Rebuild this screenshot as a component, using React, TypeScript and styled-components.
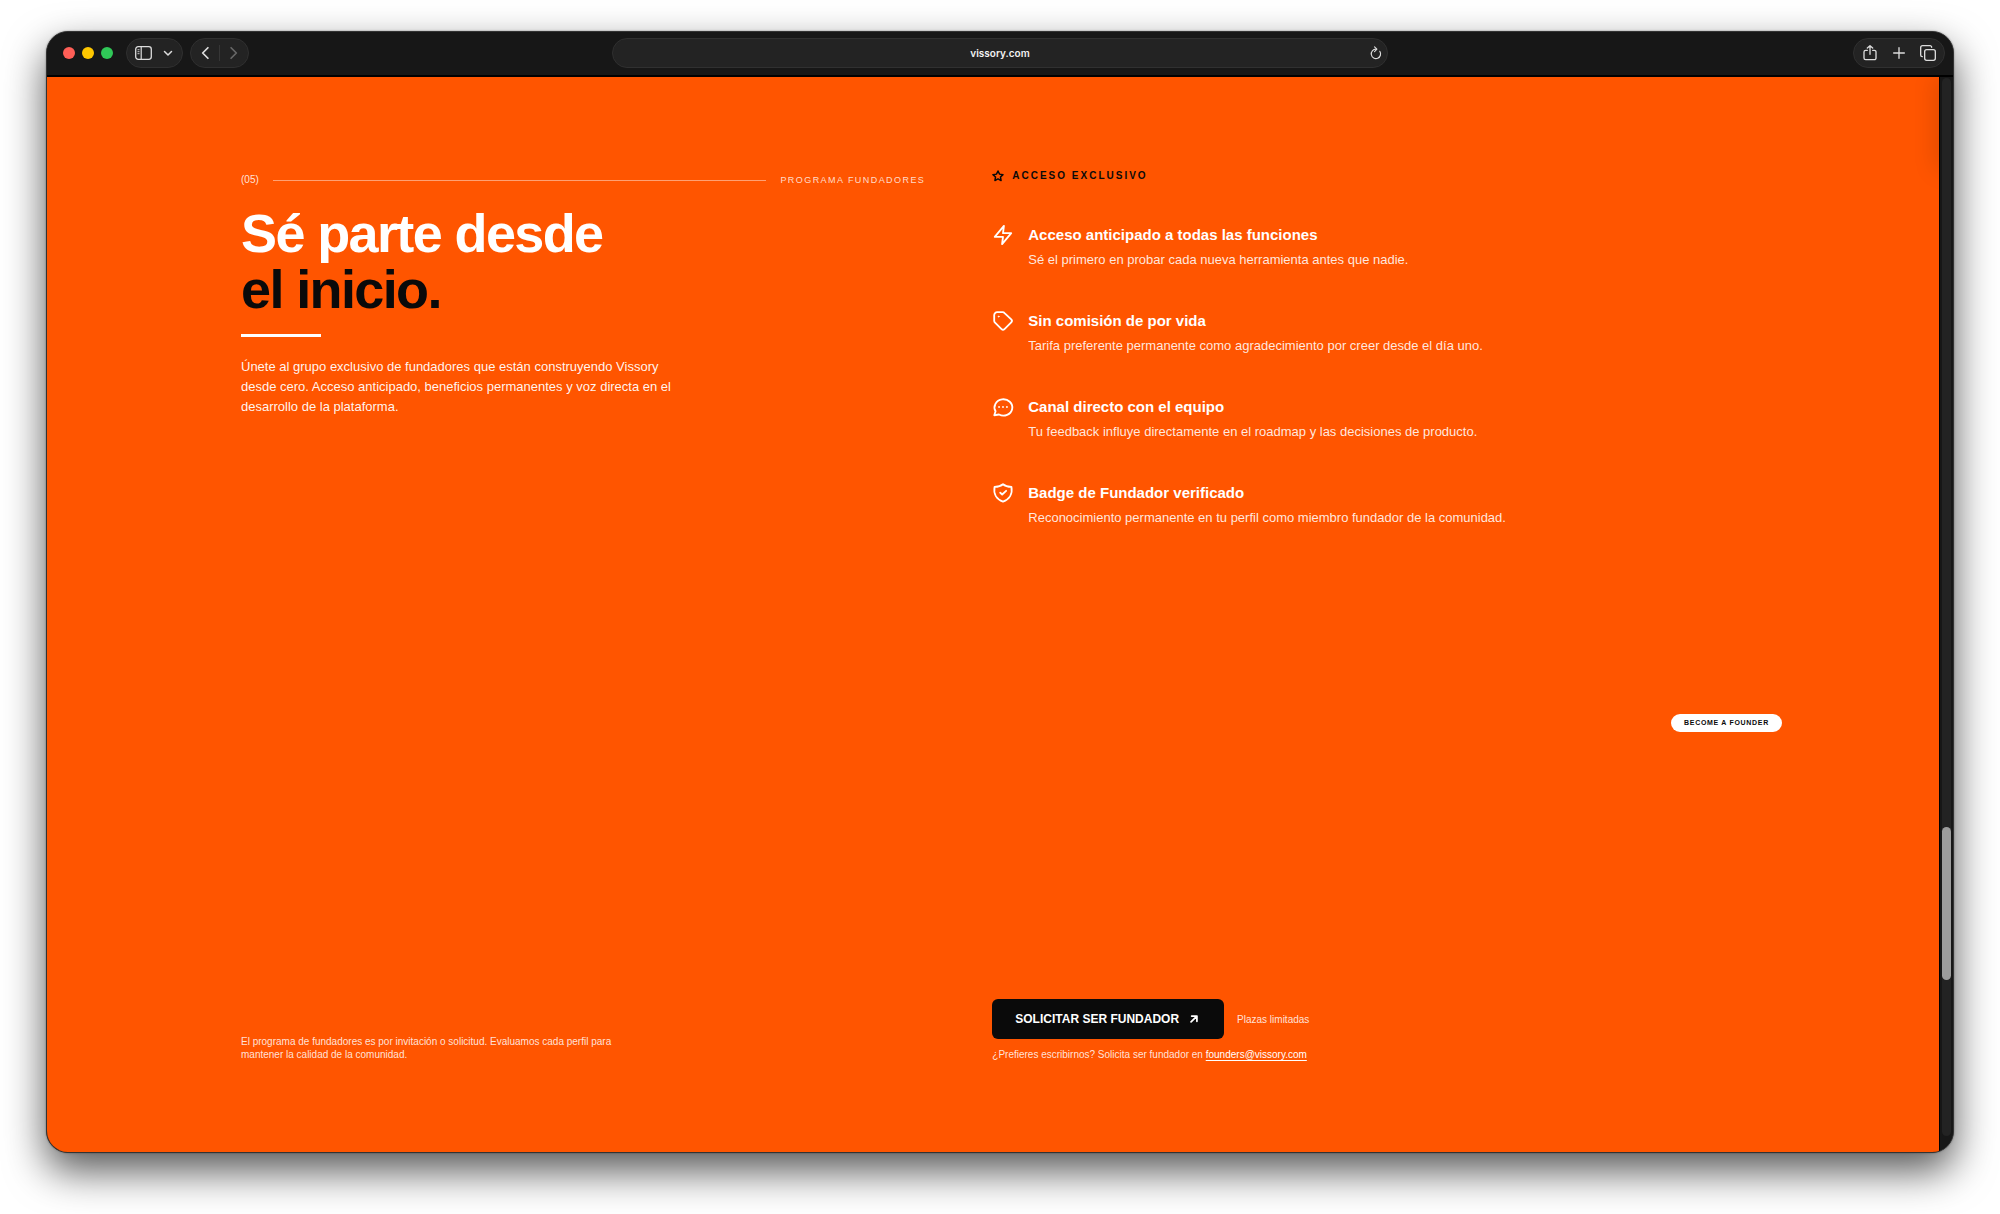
import React, { useState } from "react";
import styled, { createGlobalStyle } from "styled-components";

const orange = "#ff5500";
const ink = "#0a0a0a";

const GlobalStyle = createGlobalStyle`
  *, *::before, *::after { box-sizing: border-box; }
  body {
    margin: 0;
    background: #fff;
    font-family: "Liberation Sans", Arial, Helvetica, sans-serif;
    -webkit-font-smoothing: antialiased;
  }
  h2, h3, p, ul { margin: 0; padding: 0; }
  button, input { font: inherit; }
  svg { display: block; flex: none; }
`;

const Desktop = styled.div`
  display: flex;
  min-height: 100vh;
  padding: 31px 46px 61px;
`;

const Window = styled.div`
  flex: 1;
  min-width: 0;
  display: flex;
  flex-direction: column;
  overflow: hidden;
  border: 1px solid #333;
  border-radius: 22px;
  background: #171717;
  box-shadow: 0 18px 40px rgba(0, 0, 0, 0.66), 0 0 2px rgba(0, 0, 0, 0.4);
`;

const Toolbar = styled.header`
  display: grid;
  grid-template-columns: 1fr minmax(0, 776px) 1fr;
  align-items: center;
  height: 45px;
  padding: 0 8px 1px;
  border-bottom: 2px solid #000;
  background: #171717;
`;

const ToolbarSide = styled.div<{ $end?: boolean }>`
  display: flex;
  align-items: center;
  gap: 7px;
  justify-content: ${(p) => (p.$end ? "flex-end" : "flex-start")};
`;

const Lights = styled.div`
  display: flex;
  gap: 7px;
  margin: 0 6px 0 8px;
`;

const Light = styled.button<{ $color: string }>`
  width: 12px;
  height: 12px;
  padding: 0;
  border: 0;
  border-radius: 50%;
  background: ${(p) => p.$color};
`;

const Pill = styled.div<{ $gap: number; $pad: number }>`
  display: flex;
  align-items: center;
  gap: ${(p) => p.$gap}px;
  height: 30px;
  padding: 0 ${(p) => p.$pad}px;
  border: 1px solid #303030;
  border-radius: 15px;
  background: #232323;
`;

const IconButton = styled.button<{ $dim?: boolean }>`
  display: flex;
  padding: 0;
  border: 0;
  background: none;
  color: ${(p) => (p.$dim ? "#666" : "#dcdcdc")};
`;

const PillDivider = styled.span`
  width: 1px;
  height: 16px;
  background: #363636;
`;

const Address = styled.form`
  display: flex;
  align-items: center;
  height: 30px;
  padding: 0 4px 0 18px;
  border: 1px solid #303030;
  border-radius: 15px;
  background: #232323;
`;

const AddressInput = styled.input`
  flex: 1;
  min-width: 0;
  padding: 0;
  border: 0;
  outline: 0;
  background: none;
  color: #f2f2f2;
  font-family: Inter, "Liberation Sans", sans-serif;
  font-size: 10px;
  font-weight: 600;
  line-height: 14px;
  text-align: center;
`;

const Viewport = styled.div`
  flex: 1;
  display: flex;
`;

const Page = styled.main`
  position: relative;
  flex: 1;
  min-width: 0;
  display: flex;
  overflow: hidden;
  padding: 93px 32px 91px;
  background: ${orange};
  color: #fff;

  &::after {
    content: "";
    position: absolute;
    top: 0;
    right: -12px;
    width: 12px;
    height: 92px;
    box-shadow: 0 0 24px rgba(0, 0, 0, 0.22);
  }
`;

const Columns = styled.section`
  flex: 1;
  display: grid;
  grid-template-columns: minmax(0, 10fr) minmax(0, 11fr);
  column-gap: 67px;
  max-width: 1504px;
  margin: 0 auto;
`;

const Column = styled.div`
  display: flex;
  flex-direction: column;
  justify-content: space-between;
`;

const SectionHead = styled.div`
  display: flex;
  align-items: center;
  gap: 14px;
  height: 20px;
  margin-bottom: 15px;
`;

const SectionNumber = styled.span`
  color: rgba(255, 255, 255, 0.85);
  font-size: 10px;
  line-height: 14px;
`;

const SectionRule = styled.span`
  flex: 1;
  height: 1px;
  background: rgba(255, 255, 255, 0.45);
`;

const SectionLabel = styled.span`
  color: rgba(255, 255, 255, 0.8);
  font-size: 9px;
  line-height: 14px;
  letter-spacing: 0.16em;
  text-transform: uppercase;
`;

const Title = styled.h2`
  font-size: 54px;
  font-weight: 700;
  line-height: 56px;
  letter-spacing: -0.03em;
`;

const TitleAccent = styled.span`
  display: block;
  color: ${ink};
`;

const TitleBar = styled.div`
  width: 80px;
  height: 3px;
  margin: 17px 0 20px;
  background: #fff;
`;

const Lead = styled.p`
  max-width: 432px;
  color: rgba(255, 255, 255, 0.95);
  font-size: 13px;
  line-height: 20px;
`;

const Note = styled.p`
  max-width: 380px;
  color: rgba(255, 255, 255, 0.85);
  font-size: 10px;
  line-height: 13px;
`;

const Eyebrow = styled.p`
  display: flex;
  align-items: center;
  gap: 8px;
  margin-bottom: 42px;
  color: ${ink};
  font-size: 10px;
  font-weight: 700;
  line-height: 12px;
  letter-spacing: 0.2em;
  text-transform: uppercase;
`;

const Benefits = styled.ul`
  display: flex;
  flex-direction: column;
  gap: 40px;
  list-style: none;
`;

const Benefit = styled.li`
  display: flex;
  gap: 14px;
`;

const BenefitTitle = styled.h3`
  margin-bottom: 4px;
  font-size: 15px;
  font-weight: 700;
  line-height: 22px;
`;

const BenefitText = styled.p`
  color: rgba(255, 255, 255, 0.88);
  font-size: 13px;
  line-height: 20px;
`;

const Actions = styled.div`
  display: flex;
  align-items: center;
  gap: 13px;
  margin-bottom: 9px;
`;

const Apply = styled.button`
  display: flex;
  align-items: center;
  gap: 8px;
  height: 40px;
  padding: 0 23px;
  border: 0;
  border-radius: 6px;
  background: ${ink};
  color: #fff;
  font-size: 12px;
  font-weight: 700;
  text-transform: uppercase;
`;

const Small = styled.p`
  color: rgba(255, 255, 255, 0.85);
  font-size: 10px;
  line-height: 13px;
`;

const MailLink = styled.a`
  color: #fff;
  text-decoration: underline;
  text-underline-offset: 2px;
`;

const FounderBadge = styled.button`
  position: absolute;
  top: 637px;
  right: 157px;
  height: 18px;
  padding: 0 13px;
  border: 0;
  border-radius: 9px;
  background: #fff;
  color: ${ink};
  font-size: 7px;
  font-weight: 700;
  line-height: 18px;
  letter-spacing: 0.1em;
  text-transform: uppercase;
`;

const ScrollGutter = styled.div`
  display: flex;
  width: 14px;
  padding: 1px 2px 16px;
  border-left: 1px solid #000;
  background: #171717;
`;

const ScrollTrack = styled.div`
  position: relative;
  flex: 1;
  border-radius: 5px;
  background: #232323;
`;

const ScrollThumb = styled.div`
  position: absolute;
  top: 70.8%;
  left: 0;
  right: 0;
  height: 14.5%;
  border-radius: 5px;
  background: #9c9c9c;
`;

type StrokeProps = { size: number; width?: number; children: React.ReactNode };

function Stroke({ size, width = 2, children }: StrokeProps) {
  return (
    <svg
      width={size}
      height={size}
      viewBox="0 0 24 24"
      fill="none"
      stroke="currentColor"
      strokeWidth={width}
      strokeLinecap="round"
      strokeLinejoin="round"
      aria-hidden="true"
    >
      {children}
    </svg>
  );
}

const benefits = [
  {
    title: "Acceso anticipado a todas las funciones",
    text: "Sé el primero en probar cada nueva herramienta antes que nadie.",
    icon: <polygon points="13 2 3 14 12 14 11 22 21 10 12 10 13 2" />,
  },
  {
    title: "Sin comisión de por vida",
    text: "Tarifa preferente permanente como agradecimiento por creer desde el día uno.",
    icon: (
      <>
        <path d="M13.700 3.400A3 3 0 0 0 11.600 2.400H5.600A3.200 3.200 0 0 0 2.400 5.600v6a3 3 0 0 0 .9 2.100l7.100 7.100a2.300 2.300 0 0 0 3.200 0l7.400-7.400a2.300 2.300 0 0 0 0-3.200z" />
        <circle cx="7.200" cy="7.200" r=".5" fill="currentColor" strokeWidth="1" />
      </>
    ),
  },
  {
    title: "Canal directo con el equipo",
    text: "Tu feedback influye directamente en el roadmap y las decisiones de producto.",
    icon: (
      <>
        <path d="M7.600 20.200A9.700 8.900 0 1 0 3.900 16.700L2.500 21Z" />
        <path d="M7.700 12h.01M12 12h.01M16.300 12h.01" />
      </>
    ),
  },
  {
    title: "Badge de Fundador verificado",
    text: "Reconocimiento permanente en tu perfil como miembro fundador de la comunidad.",
    icon: (
      <>
        <path d="M12 2.500C9.500 4.700 6.300 5.300 2.800 5.400C1.400 13 5 19 12 21.400C19 19 22.600 13 21.200 5.400C17.700 5.300 14.500 4.700 12 2.500Z" />
        <path d="m9 11.700 2.100 1.900 4.300-4" />
      </>
    ),
  },
];

export default function App() {
  const [url, setUrl] = useState("vissory.com");

  return (
    <>
      <GlobalStyle />
      <Desktop>
        <Window>
          <Toolbar>
            <ToolbarSide>
              <Lights>
                <Light $color="#ff5f57" aria-label="Cerrar" />
                <Light $color="#fec700" aria-label="Minimizar" />
                <Light $color="#30c858" aria-label="Ampliar" />
              </Lights>
              <Pill $gap={10} $pad={8}>
                <IconButton aria-label="Barra lateral">
                  <svg width="17" height="14" viewBox="0 0 17 14" fill="none" stroke="currentColor" aria-hidden="true">
                    <rect x="0.700" y="0.700" width="15.600" height="12.600" rx="2.500" strokeWidth="1.300" />
                    <path d="M6.200 1v12" strokeWidth="1.200" />
                    <path d="M2.500 3.700h2M2.500 5.700h2M2.500 7.700h2" strokeWidth="0.900" />
                  </svg>
                </IconButton>
                <IconButton aria-label="Grupos de pestañas">
                  <Stroke size={12} width={3}>
                    <path d="m5 9 7 7 7-7" />
                  </Stroke>
                </IconButton>
              </Pill>
              <Pill $gap={7} $pad={7}>
                <IconButton aria-label="Atrás">
                  <Stroke size={14} width={3}>
                    <path d="m17 3-9 9 9 9" />
                  </Stroke>
                </IconButton>
                <PillDivider />
                <IconButton $dim aria-label="Adelante">
                  <Stroke size={14} width={3}>
                    <path d="m7 3 9 9-9 9" />
                  </Stroke>
                </IconButton>
              </Pill>
            </ToolbarSide>

            <Address onSubmit={(e) => e.preventDefault()}>
              <AddressInput aria-label="Dirección" value={url} onChange={(e) => setUrl(e.target.value)} />
              <IconButton type="button" aria-label="Recargar">
                <Stroke size={14} width={2}>
                  <path d="M18.500 9a8 8 0 1 1-6.500-3.500" />
                  <path d="m9.500 1.500 4 4-4 4" />
                </Stroke>
              </IconButton>
            </Address>

            <ToolbarSide $end>
              <Pill $gap={13} $pad={8}>
                <IconButton aria-label="Compartir">
                  <Stroke size={16} width={2}>
                    <path d="M8 8H5.500A2.500 2.500 0 0 0 3 10.500v9A2.500 2.500 0 0 0 5.500 22h13a2.500 2.500 0 0 0 2.500-2.500v-9A2.500 2.500 0 0 0 18.500 8H16" />
                    <path d="M12 14V1M8 4.500 12 1l4 3.500" />
                  </Stroke>
                </IconButton>
                <IconButton aria-label="Nueva pestaña">
                  <Stroke size={16} width={2}>
                    <path d="M12 4v16M4 12h16" />
                  </Stroke>
                </IconButton>
                <IconButton aria-label="Ver pestañas">
                  <Stroke size={16} width={2}>
                    <rect x="7" y="7" width="16" height="16" rx="3" />
                    <path d="M3.500 17.500A2.500 2.500 0 0 1 1 15V4a3 3 0 0 1 3-3h11a2.500 2.500 0 0 1 2.500 2.500" />
                  </Stroke>
                </IconButton>
              </Pill>
            </ToolbarSide>
          </Toolbar>

          <Viewport>
            <Page>
              <Columns>
                <Column>
                  <div>
                    <SectionHead>
                      <SectionNumber>(05)</SectionNumber>
                      <SectionRule />
                      <SectionLabel>Programa Fundadores</SectionLabel>
                    </SectionHead>
                    <Title>
                      Sé parte desde <TitleAccent>el inicio.</TitleAccent>
                    </Title>
                    <TitleBar />
                    <Lead>
                      Únete al grupo exclusivo de fundadores que están construyendo Vissory desde cero. Acceso
                      anticipado, beneficios permanentes y voz directa en el desarrollo de la plataforma.
                    </Lead>
                  </div>
                  <Note>
                    El programa de fundadores es por invitación o solicitud. Evaluamos cada perfil para mantener la
                    calidad de la comunidad.
                  </Note>
                </Column>

                <Column>
                  <div>
                    <Eyebrow>
                      <Stroke size={12} width={3}>
                        <polygon points="12 2 15.090 8.260 22 9.270 17 14.140 18.180 21.020 12 17.770 5.820 21.020 7 14.140 2 9.270 8.910 8.260 12 2" />
                      </Stroke>
                      Acceso exclusivo
                    </Eyebrow>
                    <Benefits>
                      {benefits.map((b) => (
                        <Benefit key={b.title}>
                          <Stroke size={22}>{b.icon}</Stroke>
                          <div>
                            <BenefitTitle>{b.title}</BenefitTitle>
                            <BenefitText>{b.text}</BenefitText>
                          </div>
                        </Benefit>
                      ))}
                    </Benefits>
                  </div>
                  <div>
                    <Actions>
                      <Apply>
                        Solicitar ser fundador
                        <Stroke size={14} width={3}>
                          <path d="M8 7h9v9M7 17 17 7" />
                        </Stroke>
                      </Apply>
                      <Small>Plazas limitadas</Small>
                    </Actions>
                    <Small>
                      ¿Prefieres escribirnos? Solicita ser fundador en{" "}
                      <MailLink href="mailto:founders@vissory.com">founders@vissory.com</MailLink>
                    </Small>
                  </div>
                </Column>
              </Columns>
              <FounderBadge>Become a founder</FounderBadge>
            </Page>
            <ScrollGutter>
              <ScrollTrack>
                <ScrollThumb />
              </ScrollTrack>
            </ScrollGutter>
          </Viewport>
        </Window>
      </Desktop>
    </>
  );
}
